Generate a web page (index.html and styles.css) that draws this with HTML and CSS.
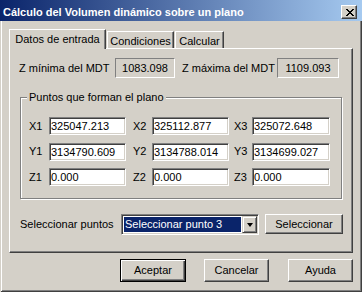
FILE: index.html
```
<!DOCTYPE html>
<html lang="es">
<head>
  <meta charset="UTF-8" />
  <title>Cálculo del Volumen dinámico sobre un plano</title>
  <link rel="stylesheet" href="styles.css">
</head>
<body>

  <div class="window">
    <div class="titlebar">
      <span class="title">Cálculo del Volumen dinámico sobre un plano</span>
      <span class="close-btn" aria-label="Cerrar">
        <svg width="8" height="7" viewBox="0 0 8 7"><path d="M0 0h2v1H0zM6 0h2v1H6zM1 1h2v1H1zM5 1h2v1H5zM2 2h4v1H2zM3 3h2v1H3zM2 4h4v1H2zM1 5h2v1H1zM5 5h2v1H5zM0 6h2v1H0zM6 6h2v1H6z" fill="#000"/></svg>
      </span>
    </div>

    <div class="content">
      <div class="tabs">
        <div class="tab tab-active">Datos de entrada</div>
        <div class="tab tab-cond">Condiciones</div>
        <div class="tab tab-calc">Calcular</div>
      </div>

      <div class="panel">
        <div class="mdt-row">
          <span class="mdt-label">Z mínima del MDT</span>
          <span class="static-box static-min">1083.098</span>
          <span class="mdt-label mdt-label-max">Z máxima del MDT</span>
          <span class="static-box static-max">1109.093</span>
        </div>

        <fieldset class="group">
          <legend>Puntos que forman el plano</legend>
          <div class="coord-grid">
            <label for="x1">X1</label><input class="edit" id="x1" value="325047.213" />
            <label for="x2" class="lbl-2">X2</label><input class="edit" id="x2" value="325112.877" />
            <label for="x3" class="lbl-3">X3</label><input class="edit" id="x3" value="325072.648" />
            <label for="y1">Y1</label><input class="edit" id="y1" value="3134790.609" />
            <label for="y2" class="lbl-2">Y2</label><input class="edit" id="y2" value="3134788.014" />
            <label for="y3" class="lbl-3">Y3</label><input class="edit" id="y3" value="3134699.027" />
            <label for="z1">Z1</label><input class="edit" id="z1" value="0.000" />
            <label for="z2" class="lbl-2">Z2</label><input class="edit" id="z2" value="0.000" />
            <label for="z3" class="lbl-3">Z3</label><input class="edit" id="z3" value="0.000" />
          </div>
        </fieldset>

        <div class="select-row">
          <span class="select-label">Seleccionar puntos</span>
          <div class="combo">
            <span class="combo-text">Seleccionar punto 3</span>
            <span class="combo-arrow"><span class="arrow-down"></span></span>
          </div>
          <button class="btn btn-select">Seleccionar</button>
        </div>
      </div>

      <div class="actions">
        <button class="btn btn-default">Aceptar</button>
        <button class="btn">Cancelar</button>
        <button class="btn btn-help">Ayuda</button>
      </div>
    </div>
  </div>

</body>
</html>
```

FILE: styles.css
```
html, body {
  margin: 0;
  padding: 0;
  background: #d4d0c8;
  font-family: "Liberation Sans", Arial, sans-serif;
  font-size: 11px;
  line-height: 13px;
  color: #000;
}
.window {
  width: 362px;
  height: 292px;
  box-sizing: border-box;
  background: #d4d0c8;
  box-shadow: inset 1px 0 0 #d4d0c8, inset -1px -1px 0 #404040, inset 2px 0 0 #fff, inset -2px -2px 0 #808080;
  overflow: hidden;
}
/* Title bar */
.titlebar {
  height: 21px;
  display: flex;
  justify-content: space-between;
  align-items: flex-start;
  padding: 0 5px 0 3px;
  background: linear-gradient(to right, #0a246a, #a6caf0);
}
.title {
  margin-top: 6px;
  color: #fff;
  font-weight: bold;
  white-space: nowrap;
}
.close-btn {
  margin-top: 5px;
  width: 16px;
  height: 14px;
  box-sizing: border-box;
  display: flex;
  align-items: center;
  justify-content: center;
  background: #d4d0c8;
  border: 1px solid;
  border-color: #fff #404040 #404040 #fff;
  box-shadow: inset -1px -1px 0 #808080;
}
.close-btn svg {
  display: block;
  margin: 0 0 0 1px;
}
/* Content */
.content {
  padding: 8px 0 0 9px;
}
.tabs {
  display: flex;
  align-items: flex-end;
  height: 19px;
}
.tab {
  box-sizing: border-box;
  height: 17px;
  padding-top: 3px;
  text-align: center;
  white-space: nowrap;
  border-top: 1px solid #fff;
  border-left: 1px solid #fff;
  border-right: 1px solid #404040;
  box-shadow: inset -1px 0 0 #808080;
}
.tab-active {
  position: relative;
  z-index: 1;
  width: 97px;
  height: 20px;
  margin-bottom: -1px;
  background: #d4d0c8;
}
.tab-cond {
  width: 67px;
  margin-left: 1px;
}
.tab-calc {
  width: 49px;
  margin-left: 1px;
}
.panel {
  width: 344px;
  height: 205px;
  box-sizing: border-box;
  padding: 9px 0 0 9px;
  border: 1px solid;
  border-color: #fff #404040 #404040 #fff;
  box-shadow: inset -1px -1px 0 #808080;
}
/* Z MDT row */
.mdt-row {
  display: flex;
  height: 20px;
  align-items: center;
}
.mdt-label {
  width: 96px;
  white-space: nowrap;
}
.mdt-label-max {
  width: 95px;
  margin-left: 7px;
}
.static-box {
  box-sizing: border-box;
  height: 20px;
  line-height: 18px;
  text-align: center;
  border: 1px solid;
  border-color: #808080 #fff #fff #808080;
}
.static-min {
  width: 60px;
}
.static-max {
  width: 62px;
}
/* Group box */
.group {
  width: 322px;
  box-sizing: border-box;
  margin: 13px 0 0 1px;
  padding: 13px 0 12px 0;
  border: 1px solid #808080;
  box-shadow: 1px 1px 0 #fff, inset 1px 1px 0 #fff;
}
.group legend {
  margin-left: 6px;
  padding: 0 2px;
  background: #d4d0c8;
}
.coord-grid {
  display: grid;
  grid-template-columns: 20px 77px 26px 77px 23px 78px;
  grid-auto-rows: 18px;
  row-gap: 7.5px;
  align-items: center;
  margin-left: 8px;
}
.lbl-2 {
  padding-left: 7px;
}
.lbl-3 {
  padding-left: 5px;
}
.edit {
  box-sizing: border-box;
  width: 100%;
  height: 18px;
  margin: 0;
  padding: 0 0 0 1px;
  font: inherit;
  line-height: 14px;
  color: #000;
  background: #fff;
  border: 1px solid;
  border-color: #808080 #fff #fff #808080;
  box-shadow: inset 1px 1px 0 #404040, inset -1px -1px 0 #d4d0c8;
  outline: none;
}
/* Selection row */
.select-row {
  display: flex;
  align-items: flex-start;
  margin: 15px 0 0 1px;
}
.select-label {
  width: 101px;
  line-height: 21px;
  white-space: nowrap;
}
.combo {
  box-sizing: border-box;
  width: 138px;
  height: 21px;
  display: flex;
  padding: 1px;
  background: #fff;
  border: 1px solid;
  border-color: #808080 #fff #fff #808080;
  box-shadow: inset 1px 1px 0 #404040, inset -1px -1px 0 #d4d0c8;
}
.combo-text {
  flex: 1;
  margin: 1px;
  padding-left: 1px;
  line-height: 15px;
  color: #fff;
  background: #0a246a;
  white-space: nowrap;
}
.combo-arrow {
  width: 15px;
  box-sizing: border-box;
  display: flex;
  align-items: center;
  justify-content: center;
  background: #d4d0c8;
  border: 1px solid;
  border-color: #d4d0c8 #404040 #404040 #d4d0c8;
  box-shadow: inset 1px 1px 0 #fff, inset -1px -1px 0 #808080;
}
.arrow-down {
  width: 0;
  height: 0;
  border-left: 3.5px solid transparent;
  border-right: 3.5px solid transparent;
  border-top: 4px solid #000;
}
/* Buttons */
.btn {
  box-sizing: border-box;
  margin: 0;
  padding: 0;
  font: inherit;
  color: #000;
  background: #d4d0c8;
  border: 1px solid;
  border-color: #fff #404040 #404040 #fff;
  box-shadow: inset -1px -1px 0 #808080;
  text-align: center;
}
.btn-select {
  width: 78px;
  height: 20px;
  margin-left: 6px;
}
.actions {
  display: flex;
  justify-content: flex-end;
  width: 344px;
  margin-top: 6px;
  gap: 18px;
}
.actions .btn {
  width: 65px;
  height: 23px;
}
.actions .btn-default {
  width: 66px;
  border: 1px solid #000;
  box-shadow: inset 1px 1px 0 #fff, inset -1px -1px 0 #404040, inset -2px -2px 0 #808080;
}
.actions .btn-help {
  margin-left: 1px;
}
```
